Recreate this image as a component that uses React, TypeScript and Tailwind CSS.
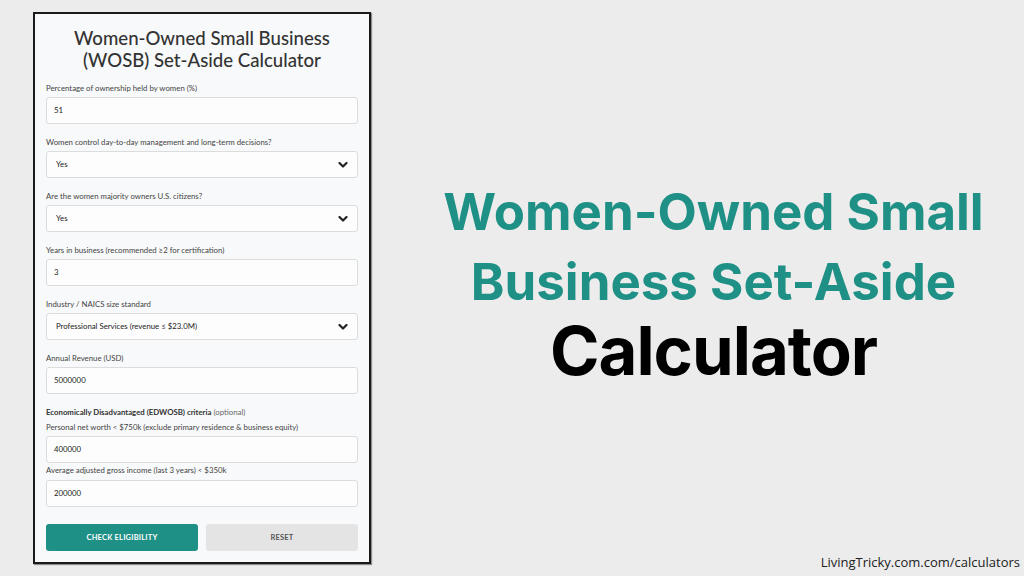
import React from "react";

const Chevron = () => (
  <svg width="10" height="7" viewBox="0 0 10 7" className="absolute right-[9px] top-1/2 -translate-y-1/2">
    <path d="M1.5 1.5 L5 5 L8.5 1.5" fill="none" stroke="#222" strokeWidth="2.2" strokeLinecap="round" strokeLinejoin="round" />
  </svg>
);

const Label = ({ children, className = "" }: { children: React.ReactNode; className?: string }) => (
  <div className={`h-[12px] leading-[12px] text-[7.8px] text-[#444] ${className}`}>{children}</div>
);

const Input = ({ value, select }: { value: string; select?: boolean }) => (
  <div className="relative h-[27px] rounded-[3px] border border-[#dcdcdc] bg-[#fdfdfd] flex items-center pl-[7px] text-[7.8px] text-[#222]">
    <span className={select ? "pl-[2px]" : ""}>{value}</span>
    {select && <Chevron />}
  </div>
);

const Field = ({ label, value, select }: { label: string; value: string; select?: boolean }) => (
  <div className="flex flex-col gap-[3px]">
    <Label>{label}</Label>
    <Input value={value} select={select} />
  </div>
);

export default function App() {
  return (
    <div className="w-[1024px] h-[576px] bg-[#ececec] flex relative overflow-hidden" style={{ fontFamily: "Lato, 'Open Sans', sans-serif" }}>
      <div className="pl-[33px] pt-[12px]">
        <div className="w-[338px] h-[552px] border-2 border-[#1a1a1a] bg-[#f8f9fa] px-[11px] pt-[13px] shadow-[1px_1px_1px_rgba(0,0,0,0.4)]">
          <div className="text-center text-[18.6px] leading-[22px] text-[#333] font-medium">
            Women-Owned Small Business
            <br />
            (WOSB) Set-Aside Calculator
          </div>
          <div className="mt-[11px] flex flex-col gap-[12px]">
            <Field label="Percentage of ownership held by women (%)" value="51" />
            <Field label="Women control day-to-day management and long-term decisions?" value="Yes" select />
            <Field label="Are the women majority owners U.S. citizens?" value="Yes" select />
            <Field label="Years in business (recommended ≥2 for certification)" value="3" />
            <Field label="Industry / NAICS size standard" value="Professional Services (revenue ≤ $23.0M)" select />
            <Field label="Annual Revenue (USD)" value="5000000" />
          </div>
          <div className="mt-[12px] h-[12px] leading-[12px] text-[7.8px] text-[#333]">
            <span className="font-bold">Economically Disadvantaged (EDWOSB) criteria</span>{" "}
            <span className="text-[#666]">(optional)</span>
          </div>
          <div className="mt-[3px] flex flex-col gap-[3px]">
            <Label>Personal net worth &lt; $750k (exclude primary residence &amp; business equity)</Label>
            <Input value="400000" />
          </div>
          <div className="mt-[1px] flex flex-col gap-[4px]">
            <Label>Average adjusted gross income (last 3 years) &lt; $350k</Label>
            <Input value="200000" />
          </div>
          <div className="mt-[17px] grid grid-cols-2 gap-[8px]">
            <div className="h-[27px] rounded-[3px] bg-[#1e9085] flex items-center justify-center text-white text-[7.5px] font-bold tracking-[0.2px]">
              CHECK ELIGIBILITY
            </div>
            <div className="h-[27px] rounded-[3px] bg-[#e4e4e4] flex items-center justify-center text-[#555] text-[7.5px] font-bold tracking-[0.2px]">
              RESET
            </div>
          </div>
        </div>
      </div>
      <div className="flex-1 flex flex-col items-center pt-[177px] pl-[32px]" style={{ fontFamily: "Inter, sans-serif" }}>
        <div className="text-[#1e9085] font-bold text-[51px] leading-[70px] text-center">
          Women-Owned Small
          <br />
          Business Set-Aside
        </div>
        <div className="text-black font-bold text-[67px] leading-[68px] text-center tracking-[-1px]">
          Calculator
        </div>
      </div>
      <div className="absolute right-[4px] bottom-[4px] text-[13px] text-[#222]" style={{ fontFamily: "'Open Sans', sans-serif" }}>
        LivingTricky.com.com/calculators
      </div>
    </div>
  );
}
